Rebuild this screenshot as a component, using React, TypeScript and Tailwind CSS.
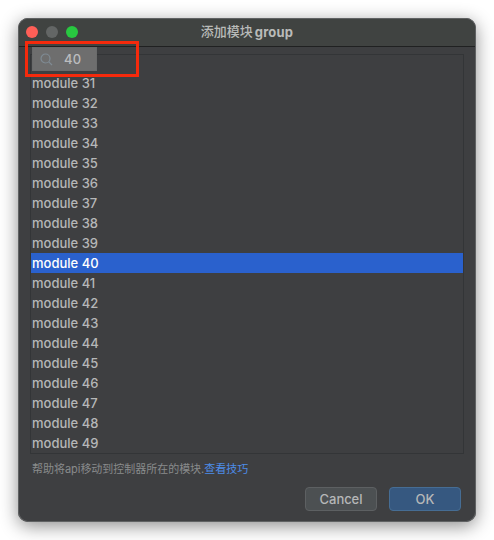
const modules = Array.from({ length: 19 }, (_, i) => 31 + i);

function SearchPopup() {
  return (
    <div className="absolute left-[14px] top-[29px] flex h-6 w-[65px] items-center border border-[#6a6b6b] bg-[#6e6e6e] pl-[7px] pt-px text-[13px] text-[#bbbdbf]">
      <svg className="h-[14px] w-[14px]" viewBox="0 0 14 14" fill="none" stroke="#7f8b94" strokeWidth="1.2">
        <circle cx="5.5" cy="5.5" r="4.5" />
        <path d="M8.8 8.8 L12 12" />
      </svg>
      <span className="ml-[10px] font-medium tracking-[0.2px]">40</span>
    </div>
  );
}

export default function App() {
  return (
    <div className="h-[540px] w-[494px] overflow-hidden bg-white pl-[18px] pt-[18px] font-['Inter','Noto_Sans_CJK_SC',sans-serif]">
      <div className="relative flex h-[504px] w-[458px] flex-col rounded-[10px] bg-[#3e3f41] shadow-[inset_0_0_0_1px_#606263,0_4px_18px_rgba(0,0,0,0.45)]">
        <header className="relative mx-px mt-px flex h-[28px] shrink-0 items-center justify-center rounded-t-[9px] border-b border-[#202121] bg-[#404341]">
          <div className="absolute left-[7px] top-[7px] flex gap-[8px]">
            <span className="h-3 w-3 rounded-full bg-[#ff5f57]" />
            <span className="h-3 w-3 rounded-full bg-[#636665]" />
            <span className="h-3 w-3 rounded-full bg-[#28c840]" />
          </div>
          <h1 className="flex items-center gap-[2px] text-[13px] font-bold leading-none text-[#b9bbb9]">
            <span className="-translate-y-px font-medium">添加模块</span>
            <span className="tracking-[0.2px]">group</span>
          </h1>
        </header>
        <ul className="ml-[12px] mt-[7px] h-[400px] w-[434px] shrink-0 border border-[#333537] pt-[18px] text-[13px] font-medium text-[#b6b7b8]">
          {modules.map((n) => (
            <li
              key={n}
              className={`flex h-5 items-center pl-px pt-[2px] ${n === 40 ? "bg-[#2a61cd] text-white" : ""}`}
            >
              module {n}
            </li>
          ))}
        </ul>
        <p className="ml-[14px] mt-[7px] flex h-4 items-center text-[11px] tracking-[-0.03px] text-[#898b8c]">
          帮助将api移动到控制器所在的模块.<a className="text-[#4d8dea]">查看技巧</a>
        </p>
        <footer className="ml-[287px] mt-[10px] flex gap-[12px] text-[13px] font-medium tracking-[-0.05px] text-[#b6b7b8]">
          <button className="h-6 w-[72px] rounded-[4px] border border-[#5d6062] bg-[#4c5052] pt-px">Cancel</button>
          <button className="h-6 w-[72px] rounded-[4px] border border-[#466d94] bg-[#365880] pt-px">OK</button>
        </footer>
        <SearchPopup />
        <div className="absolute left-[7px] top-[23px] h-[36px] w-[114px] border-[3px] border-[#f52a0c]" />
      </div>
    </div>
  );
}
